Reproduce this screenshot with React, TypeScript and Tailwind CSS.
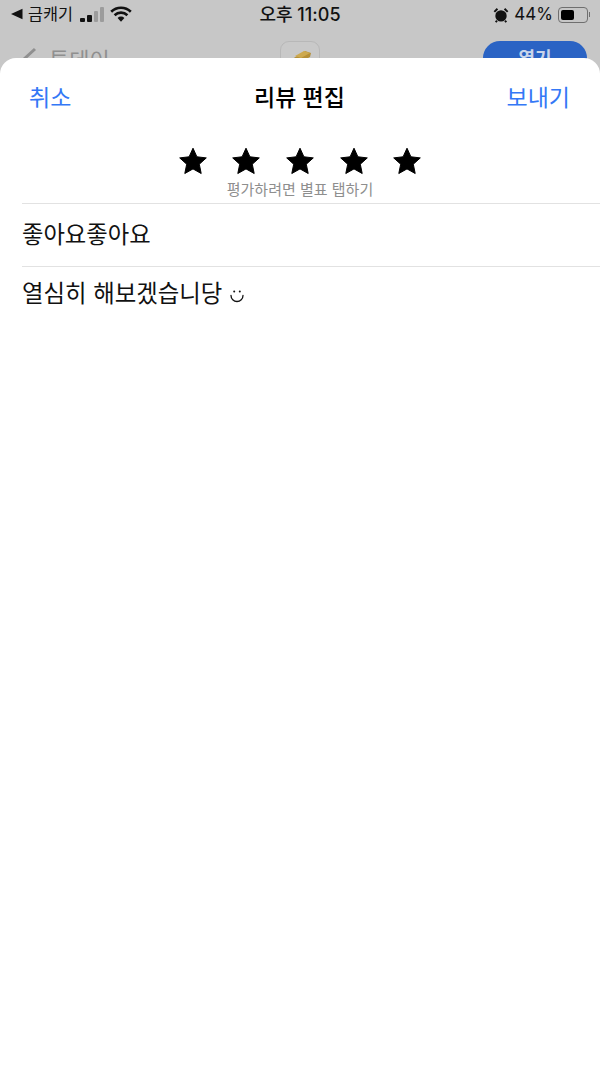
function Star() {
  return (
    <svg width="30" height="30" viewBox="0 0 30 30" className="shrink-0">
      <path
        d="M15 2.2l3.9 8.6 9.4 1.1-7 6.3 1.9 9.3L15 22.9l-8.2 4.6 1.9-9.3-7-6.3 9.4-1.1z"
        fill="#000"
        stroke="#000"
        strokeWidth="1"
        strokeLinejoin="round"
      />
    </svg>
  );
}

function Smile() {
  return (
    <svg width="16" height="16" viewBox="0 0 16 16" className="mt-[4px]">
      <circle cx="5.2" cy="3.6" r="1" fill="#111" />
      <circle cx="10.8" cy="3.6" r="1" fill="#111" />
      <path d="M2 7.5a6 6 0 0 0 12 0" fill="none" stroke="#111" strokeWidth="1.3" strokeLinecap="round" />
    </svg>
  );
}

export default function App() {
  return (
    <div className="relative h-[1067px] w-[600px] overflow-hidden bg-[#c7c7c7] font-['Inter','Noto_Sans_CJK_KR',sans-serif]">
      <div className="flex h-[29px] items-center justify-between pl-[10px] pr-[10px] text-[#111]">
        <div className="flex w-[200px] items-center">
          <svg width="13" height="12" viewBox="0 0 13 12"><path d="M12.5 .8v10.4L1 6z" fill="#111" /></svg>
          <span className="ml-[5px] text-[16.3px] leading-none">금캐기</span>
          <div className="ml-[7px] flex items-end gap-[2px]">
            <span className="h-[4px] w-[5px] rounded-[1px] bg-[#111]" />
            <span className="h-[7px] w-[5px] rounded-[1px] bg-[#111]" />
            <span className="h-[11px] w-[4px] rounded-[1px] bg-[#9c9c9c]" />
            <span className="h-[15px] w-[4px] rounded-[1px] bg-[#9c9c9c]" />
          </div>
          <svg className="ml-[6px]" width="22" height="16" viewBox="0 0 22 16">
            <path d="M1.2 5.8a14 14 0 0 1 19.6 0" fill="none" stroke="#111" strokeWidth="2.6" />
            <path d="M4.6 9.2a9.2 9.2 0 0 1 12.8 0" fill="none" stroke="#111" strokeWidth="2.6" />
            <path d="M11 15.8l-3.4-3.8a4.8 4.8 0 0 1 6.8 0z" fill="#111" />
          </svg>
        </div>
        <span className="text-[18px] font-medium leading-none">오후 11:05</span>
        <div className="flex w-[200px] items-center justify-end">
          <svg width="16" height="16" viewBox="0 0 18 18">
            <circle cx="9" cy="10" r="6.4" fill="#111" />
            <path d="M1.5 5.5L5 2M16.5 5.5L13 2M4.5 15.5L3 17M13.5 15.5L15 17" stroke="#111" strokeWidth="2.2" />
          </svg>
          <span className="ml-[5px] text-[17px] leading-none">44%</span>
          <div className="ml-[5px] flex h-[16px] w-[30px] items-center rounded-[4px] border border-[#6f6f6f] p-[2px]">
            <div className="h-full w-[13px] rounded-[2px] bg-[#000]" />
          </div>
          <div className="ml-[1px] h-[5px] w-[1px] bg-[#6f6f6f]" />
        </div>
      </div>

      <div className="flex h-[29px] items-start pl-[20px] pr-[13px] pt-[12px] text-[#8f8f8f]">
        <div className="flex w-[260px] items-start pt-[2px]">
          <svg width="18" height="22" viewBox="0 0 18 22" className="mt-[4px]"><path d="M15 2L3 13l12 11" fill="none" stroke="#8f8f8f" strokeWidth="3" /></svg>
          <span className="ml-[11px] mt-[6px] text-[22px] leading-none">투데이</span>
        </div>
        <div className="flex h-[40px] w-[40px] shrink-0 items-start justify-center rounded-[9px] border border-[#b8b8b8] bg-[#c9c9c9] pt-[6px]">
          <svg width="26" height="16" viewBox="0 0 26 16">
            <path d="M2 13L18 3l6 2-1 4-14 7-6-2z" fill="#b58f36" />
            <path d="M8 8l9-5 6 2-9 5z" fill="#cda94f" />
          </svg>
        </div>
        <div className="flex flex-1 justify-end">
          <div className="flex h-[34px] w-[104px] justify-center rounded-full bg-[#2a63c4] pt-[9px] text-[18px] font-semibold leading-none text-[#c9d5ea]">열기</div>
        </div>
      </div>

      <div className="relative z-10 h-[1009px] rounded-t-[16px] bg-white">
        <div className="flex h-[88px] items-center justify-between pb-[7px] pl-[29px] pr-[30px]">
          <span className="w-[100px] text-[23px] leading-none text-[#3478f6]">취소</span>
          <span className="text-[23px] font-medium leading-none text-[#000]">리뷰 편집</span>
          <span className="w-[100px] text-right text-[23px] leading-none text-[#3478f6]">보내기</span>
        </div>
        <div className="flex flex-col items-center">
          <div className="flex h-[30px] items-center gap-[23.7px]">
            <Star /><Star /><Star /><Star /><Star />
          </div>
          <span className="mt-[5px] text-[15px] leading-[18px] text-[#8e8e8e]">평가하려면 별표 탭하기</span>
        </div>
        <div className="ml-[22px] mt-[4px] border-t border-[#e2e2e2]">
          <div className="flex h-[62px] items-center text-[23.3px] leading-none text-[#111]">좋아요좋아요</div>
        </div>
        <div className="ml-[22px] border-t border-[#e2e2e2]">
          <div className="flex h-[56px] items-center gap-[7px] pb-[2px] text-[23.4px] leading-none text-[#111]">
            열심히 해보겠습니당 <Smile />
          </div>
        </div>
      </div>
    </div>
  );
}
